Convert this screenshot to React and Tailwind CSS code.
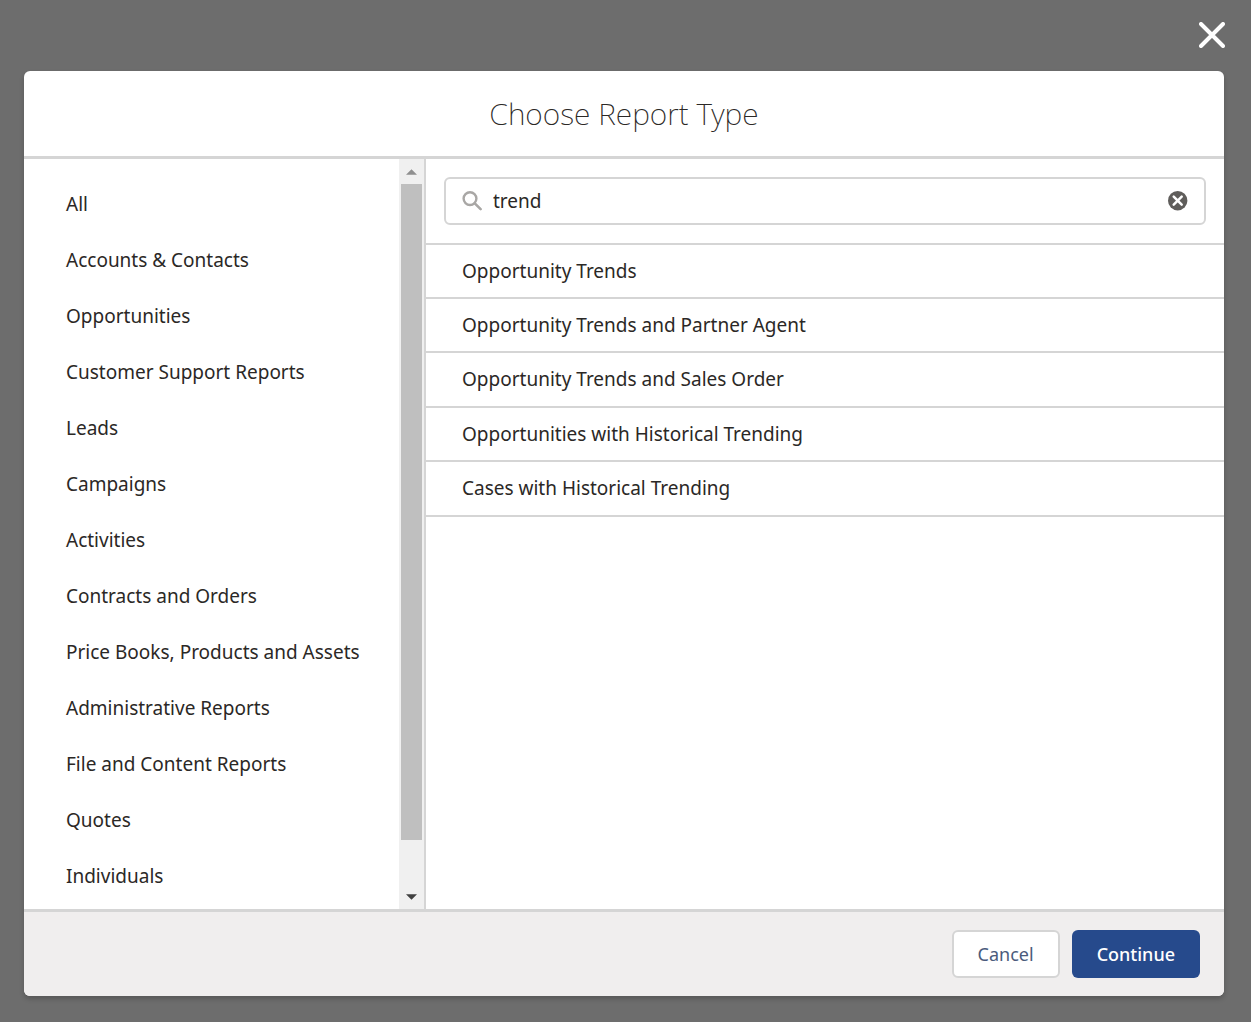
import { useState } from "react";

const categories = [
  "All",
  "Accounts & Contacts",
  "Opportunities",
  "Customer Support Reports",
  "Leads",
  "Campaigns",
  "Activities",
  "Contracts and Orders",
  "Price Books, Products and Assets",
  "Administrative Reports",
  "File and Content Reports",
  "Quotes",
  "Individuals",
];

const reportTypes = [
  "Opportunity Trends",
  "Opportunity Trends and Partner Agent",
  "Opportunity Trends and Sales Order",
  "Opportunities with Historical Trending",
  "Cases with Historical Trending",
];

function Scrollbar() {
  return (
    <div aria-hidden="true" className="flex w-[25px] shrink-0 flex-col bg-[#f0f0f0]">
      <div className="flex h-[25px] items-center justify-center">
        <svg width="11" height="6" viewBox="0 0 12 6">
          <path d="M0 6 6 0l6 6z" fill="#8f8f8f" />
        </svg>
      </div>
      <div className="flex-1 px-[2px]">
        <div className="h-15/16 bg-[#bfbfbf]" />
      </div>
      <div className="flex h-[25px] items-center justify-center">
        <svg width="11" height="6" viewBox="0 0 12 6">
          <path d="M0 0h12L6 6z" fill="#404040" />
        </svg>
      </div>
    </div>
  );
}

export default function App() {
  const [query, setQuery] = useState("trend");

  return (
    <div className="flex h-screen flex-col bg-[#6d6d6d] pr-[27px] pb-[26px] pl-6 font-['Noto_Sans',sans-serif] text-[19px] text-[#2b2826]">
      <div className="flex h-[71px] shrink-0 justify-end pt-[22px]">
        <button type="button" aria-label="Close" className="-mr-px h-[26px] w-[26px]">
          <svg width="26" height="26" viewBox="0 0 26 26" fill="none" stroke="#fff" strokeWidth="4" strokeLinecap="round">
            <path d="M2 2l22 22M24 2 2 24" />
          </svg>
        </button>
      </div>

      <div
        role="dialog"
        aria-labelledby="dialog-title"
        className="flex min-h-0 flex-1 flex-col overflow-hidden rounded-md bg-white shadow-[0_3px_5px_rgba(0,0,0,0.2)]"
      >
        <header className="flex h-[88px] shrink-0 items-center justify-center border-b-3 border-[#d5d5d5]">
          <h1 id="dialog-title" className="text-[30px] leading-10 font-extralight">
            Choose Report Type
          </h1>
        </header>

        <div className="flex min-h-0 flex-1">
          <nav aria-label="Categories" className="flex w-[402px] shrink-0 border-r-2 border-[#d5d5d5]">
            <ul className="flex-1 overflow-hidden pt-[17px]">
              {categories.map((name) => (
                <li key={name}>
                  <button type="button" className="h-14 w-full pl-[42px] text-left whitespace-nowrap">
                    {name}
                  </button>
                </li>
              ))}
            </ul>
            <Scrollbar />
          </nav>

          <main className="min-w-0 flex-1">
            <div className="px-[18px] py-[18px]">
              <label className="flex h-12 items-center rounded-md border-2 border-[#d5d5d5] pr-4 pl-4">
                <svg width="20" height="20" viewBox="0 0 20 20" fill="none" stroke="#a9a7a5" aria-hidden="true">
                  <circle cx="8" cy="7.6" r="6.4" strokeWidth="2.4" />
                  <path d="M12.8 12.4l5.8 5.8" strokeWidth="2.6" strokeLinecap="round" />
                </svg>
                <input
                  type="text"
                  aria-label="Search report types"
                  value={query}
                  onChange={(e) => setQuery(e.target.value)}
                  className="min-w-0 flex-1 pl-[11px] outline-none"
                />
                <button type="button" aria-label="Clear search" onClick={() => setQuery("")}>
                  <svg width="20" height="20" viewBox="0 0 20 20">
                    <circle cx="9.7" cy="9.7" r="9.7" fill="#5f5d5b" />
                    <path d="M5.7 5.7l8 8M13.7 5.7l-8 8" stroke="#fff" strokeWidth="2.5" strokeLinecap="round" />
                  </svg>
                </button>
              </label>
            </div>
            <ul className="border-t-2 border-[#d5d5d5]">
              {reportTypes.map((name) => (
                <li key={name} className="h-[54px] border-b-2 border-[#d5d5d5] nth-3:h-[55px] last:h-[55px]">
                  <button type="button" className="h-full w-full pl-9 text-left">
                    {name}
                  </button>
                </li>
              ))}
            </ul>
          </main>
        </div>

        <footer className="flex h-[87px] shrink-0 items-center justify-end gap-3 border-t-3 border-[#d5d5d5] bg-[#f0eeee] pr-6">
          <button type="button" className="h-12 rounded-md border-2 border-[#d5d5d5] bg-white px-6 text-[18px] text-[#4a5b7c]">
            Cancel
          </button>
          <button type="button" className="h-12 rounded-md bg-[#264a8c] px-[25px] text-[18px] font-medium text-white">
            Continue
          </button>
        </footer>
      </div>
    </div>
  );
}
